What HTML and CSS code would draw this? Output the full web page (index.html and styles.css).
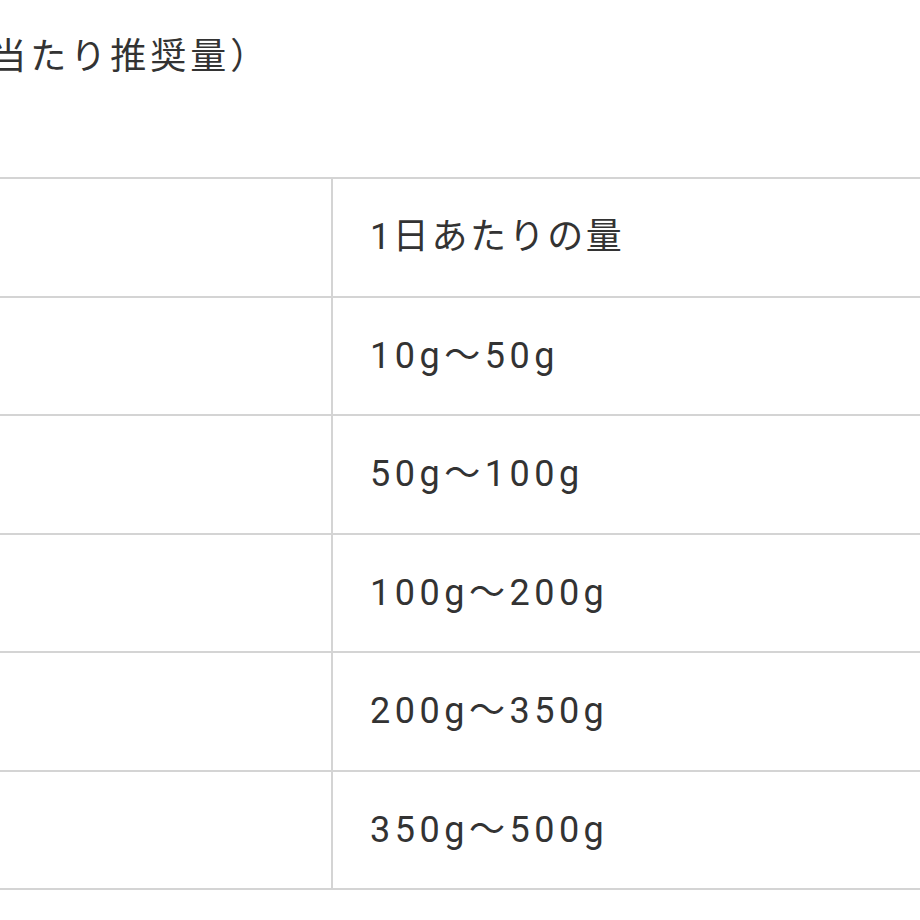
FILE: index.html
```html
<!DOCTYPE html>
<html lang="ja">
<head>
<meta charset="utf-8">
<title>1日当たり推奨量</title>
<link rel="stylesheet" href="styles.css">
</head>
<body>
<main class="page">
  <h2 class="caption">（1日当たり推奨量）</h2>
  <table class="amount-table">
    <tr><td class="col-weight"></td><td class="col-amount col-head">1日あたりの量</td></tr>
    <tr><td class="col-weight"></td><td class="col-amount">10g～50g</td></tr>
    <tr><td class="col-weight"></td><td class="col-amount">50g～100g</td></tr>
    <tr><td class="col-weight"></td><td class="col-amount">100g～200g</td></tr>
    <tr><td class="col-weight"></td><td class="col-amount">200g～350g</td></tr>
    <tr><td class="col-weight"></td><td class="col-amount">350g～500g</td></tr>
  </table>
</main>
</body>
</html>
```
FILE: styles.css
```css
html, body {
  margin: 0;
  padding: 0;
  background: #ffffff;
  overflow: hidden;
}
.page {
  width: 920px;
  font-family: Roboto, "Noto Sans CJK JP", sans-serif;
  color: #333333;
  font-size: 36px;
  letter-spacing: 4px;
}
.caption {
  margin: 0;
  padding-top: 31px;
  height: 146px;
  box-sizing: border-box;
  font-size: 36px;
  font-weight: 400;
  line-height: 52px;
  text-indent: -114px;
  white-space: nowrap;
}
.amount-table {
  width: 100%;
  border-collapse: collapse;
  margin-top: 31px;
}
.amount-table td {
  height: 116.5px;
  padding: 0;
  border-top: 2px solid #d4d4d4;
  border-bottom: 2px solid #d4d4d4;
  vertical-align: middle;
  line-height: 1.4;
}
.col-weight {
  width: 331px;
  border-right: 2px solid #d4d4d4;
}
.amount-table .col-amount {
  padding-left: 37px;
  letter-spacing: 4.5px;
}
.amount-table .col-head {
  letter-spacing: 2.6px;
}
```
